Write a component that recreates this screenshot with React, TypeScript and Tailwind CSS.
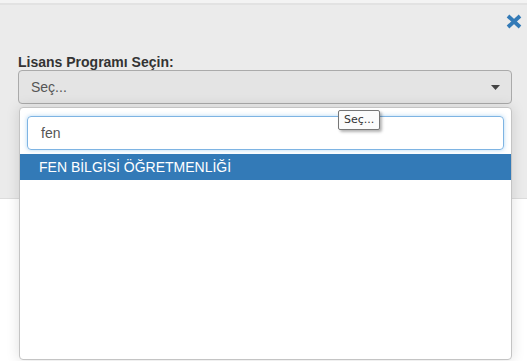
import React from "react";

export default function App() {
  return (
    <div className="relative w-[527px] h-[361px] overflow-hidden bg-white" style={{ fontFamily: '"Liberation Sans", Arial, sans-serif' }}>
      <div className="h-[199px] bg-[#ebebeb] border-t-[3px] border-t-[#f3f3f3] border-b border-b-[#dcdcdc]">
        <div className="h-[2px] bg-[#e2e2e2]" />
        <div className="flex justify-end pr-[5px] pt-[9px]">
          <svg width="16" height="15" viewBox="0 0 16 15">
            <path d="M2 2 L14 13 M14 2 L2 13" stroke="#337ab7" strokeWidth="3.8" strokeLinecap="butt" />
          </svg>
        </div>
        <div className="pl-[18px] pr-[15px] pt-[25px]">
          <div className="text-[14px] font-bold text-[#333] leading-[16px]">Lisans Programı Seçin:</div>
          <div className="h-[34px] rounded-[4px] border border-[#aaa] bg-[#e4e4e4] flex items-center justify-between pl-[12px] pr-[11px]">
            <span className="text-[14px] text-[#555]">Seç...</span>
            <svg width="9" height="5" viewBox="0 0 9 5"><path d="M0 0 L9 0 L4.5 5 Z" fill="#444" /></svg>
          </div>
        </div>
      </div>

      <div className="absolute left-[19px] top-[107px] w-[493px] h-[253px] bg-white border border-[#c4c4c4] rounded-[4px] shadow-[0_0_14px_rgba(0,0,0,0.13)] overflow-hidden">
        <div className="px-[7px] pt-[8px] pb-[4px]">
          <div className="h-[34px] rounded-[4px] border border-[#7eb4e3] shadow-[0_0_4px_rgba(102,175,233,0.5)] flex items-center pl-[13px] text-[14px] text-[#555]">fen</div>
        </div>
        <div className="h-[26px] bg-[#337ab7] text-white text-[14px] flex items-center pl-[19px]">FEN BİLGİSİ ÖĞRETMENLİĞİ</div>
      </div>

      <div className="absolute left-[338px] top-[110px] h-[20px] px-[5px] flex items-center bg-[#fbfbfb] border border-[#767676] rounded-[2px] shadow-[2px_2px_3px_rgba(0,0,0,0.3)] text-[#333]" style={{ fontFamily: '"DejaVu Sans", sans-serif', fontSize: 11 }}>Seç...</div>
    </div>
  );
}
